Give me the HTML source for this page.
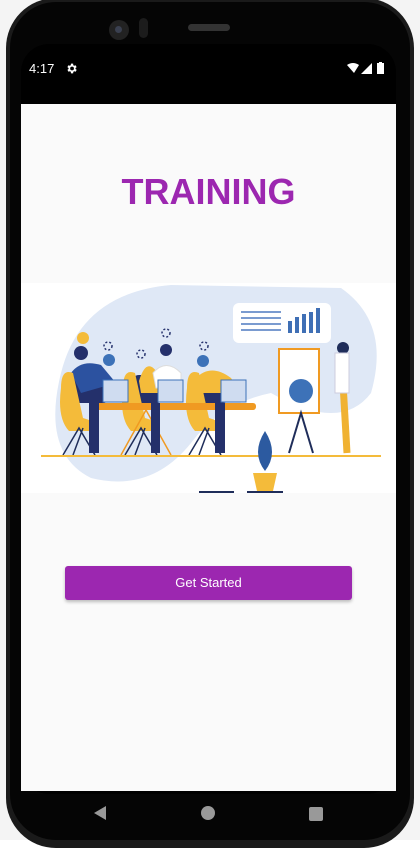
<!DOCTYPE html>
<html><head><meta charset="utf-8"><style>
*{margin:0;padding:0;box-sizing:border-box}
body{width:420px;height:840px;overflow:hidden;background:#fff;position:relative;font-family:"Liberation Sans",sans-serif}
.a{position:absolute}
</style></head><body>
<div class="a" style="left:0;top:0;width:420px;height:840px;background:#f4f4f4"></div>
<div class="a" style="left:6px;top:-2px;width:408px;height:850px;background:#1a1a1a;border-radius:50px"></div>
<div class="a" style="left:10px;top:2px;width:400px;height:838px;background:#050505;border-radius:46px"></div>
<div class="a" style="left:109px;top:20px;width:20px;height:20px;border-radius:50%;background:#222"></div>
<div class="a" style="left:115px;top:26px;width:7px;height:7px;border-radius:50%;background:#3a4050"></div>
<div class="a" style="left:139px;top:18px;width:9px;height:20px;border-radius:5px;background:#1c1c1c"></div>
<div class="a" style="left:188px;top:24px;width:42px;height:7px;border-radius:4px;background:#333"></div>
<div class="a" style="left:21px;top:44px;width:375px;height:750px;background:#000;border-radius:28px"></div>
<div class="a" style="left:29px;top:61px;color:#fff;font-size:13px">4:17</div>
<svg class="a" style="left:65px;top:62px" width="13" height="13" viewBox="0 0 24 24"><path fill="#fff" d="M19.4 13a7.5 7.5 0 000-2l2.1-1.6-2-3.5-2.5 1a7 7 0 00-1.7-1L15 3h-4l-.4 2.9a7 7 0 00-1.7 1l-2.5-1-2 3.5L6.6 11a7.5 7.5 0 000 2l-2.1 1.6 2 3.5 2.5-1a7 7 0 001.7 1L11 21h4l.4-2.9a7 7 0 001.7-1l2.5 1 2-3.5zM13 15.5a3.5 3.5 0 110-7 3.5 3.5 0 010 7z"/></svg>
<svg class="a" style="left:347px;top:62px" width="44" height="13" viewBox="0 0 44 13"><path fill="#fff" d="M0 3 Q6 -1 12 3 L7 11z"/><path fill="#fff" d="M14 12 L25 1 L25 12z"/><rect x="30" y="1" width="7" height="11" fill="#fff"/><rect x="32" y="0" width="3" height="2" fill="#fff"/></svg>
<div class="a" style="left:21px;top:104px;width:375px;height:687px;background:#fafafa"></div>
<div class="a" style="left:21px;top:172px;width:375px;text-align:center;color:#9c27b0;font-weight:bold;font-size:36px;line-height:40px">TRAINING</div>
<div class="a" style="left:21px;top:283px;width:375px;height:210px;background:#fff"></div>
<svg class="a" style="left:21px;top:283px" width="375" height="210" viewBox="0 0 375 210">
<path d="M40 90 Q60 10 150 2 L320 5 Q370 40 350 110 Q320 150 250 110 Q200 120 170 160 Q130 210 70 195 Q20 170 40 90z" fill="#dfe8f6"/>
<rect x="212" y="20" width="98" height="40" rx="6" fill="#fff"/>
<g fill="#7a9bd0"><rect x="220" y="28" width="40" height="2"/><rect x="220" y="34" width="40" height="2"/><rect x="220" y="40" width="40" height="2"/><rect x="220" y="46" width="40" height="2"/></g>
<g fill="#3f6fb5"><rect x="267" y="38" width="4" height="12"/><rect x="274" y="34" width="4" height="16"/><rect x="281" y="31" width="4" height="19"/><rect x="288" y="29" width="4" height="21"/><rect x="295" y="25" width="4" height="25"/></g>
<rect x="258" y="66" width="40" height="64" fill="#fff" stroke="#f09a22" stroke-width="2"/>
<circle cx="280" cy="108" r="12" fill="#3d72b8"/>
<path d="M268 170 L280 130 L292 170" stroke="#1f2d5a" stroke-width="2" fill="none"/>
<path d="M322 100 L326 170" stroke="#f0b232" stroke-width="7"/><circle cx="322" cy="65" r="6" fill="#1f2d5a"/><rect x="314" y="70" width="14" height="40" fill="#fff" stroke="#ccd"/>
<g fill="#24306b"><rect x="50" y="90" width="40" height="30" rx="8"/><rect x="110" y="92" width="30" height="30" rx="8"/><rect x="175" y="92" width="35" height="28" rx="8"/></g>
<circle cx="60" cy="70" r="7" fill="#24306b"/><circle cx="88" cy="77" r="6" fill="#3d72b8"/><circle cx="145" cy="67" r="6" fill="#24306b"/><circle cx="182" cy="78" r="6" fill="#3d72b8"/>
<path d="M50 90 Q60 76 80 82 L95 100 L60 110z" fill="#2c52a0"/>
<path d="M118 98 Q125 75 135 88 L140 110 L120 110z" fill="#f4bb3a"/>
<path d="M132 90 Q145 75 160 90 L160 105 L135 105z" fill="#fff" stroke="#ddd"/>
<path d="M175 95 Q190 80 210 95 L220 110 L180 110z" fill="#f4bb3a"/>
<g fill="#f4bb3a">
<path d="M40 105 Q40 85 52 90 L62 135 Q80 140 70 148 L48 148 Q36 135 40 105z"/>
<path d="M102 105 Q102 85 114 90 L124 135 Q142 140 132 148 L110 148 Q98 135 102 105z"/>
<path d="M166 105 Q166 85 178 90 L188 135 Q206 140 196 148 L174 148 Q162 135 166 105z"/>
</g>
<rect x="75" y="120" width="160" height="7" rx="3" fill="#f09a22"/>
<g fill="#cfdcf0" stroke="#3d72b8"><rect x="82" y="97" width="25" height="22"/><rect x="137" y="97" width="25" height="22"/><rect x="200" y="97" width="25" height="22"/></g>
<g stroke="#1f2d5a" stroke-width="1.5" fill="none"><path d="M42 172 L58 145 L74 172 M52 172 L62 145"/><path d="M104 172 L120 145 L136 172 M114 172 L124 145"/><path d="M168 172 L184 145 L200 172 M178 172 L188 145"/><path d="M100 172 L125 127 L150 172" stroke="#f09a22"/></g>
<g fill="#24306b"><rect x="68" y="120" width="10" height="50"/><rect x="130" y="120" width="9" height="50"/><rect x="194" y="120" width="10" height="50"/></g>
<g fill="#1f2d5a"><rect x="22" y="172" width="13" height="2" fill="#f4bb3a"/></g>
<rect x="20" y="172" width="340" height="2" fill="#f4bb3a"/>
<path d="M232 190 L256 190 L252 208 L236 208z" fill="#f4bb3a"/>
<path d="M244 188 Q230 170 244 148 Q258 170 244 188z" fill="#2c5aa0"/>
<rect x="178" y="208" width="35" height="2" fill="#1f2d5a"/><rect x="226" y="208" width="36" height="2" fill="#1f2d5a"/>
<circle cx="62" cy="55" r="6" fill="#f4bb3a"/>
<g fill="none" stroke="#24306b" stroke-width="1.5" stroke-dasharray="2 2"><circle cx="87" cy="63" r="4"/><circle cx="120" cy="71" r="4"/><circle cx="145" cy="50" r="4"/><circle cx="183" cy="63" r="4"/></g>
</svg>
<div class="a" style="left:65px;top:566px;width:287px;height:34px;background:#9c27b0;border-radius:3px;box-shadow:0 2px 3px rgba(0,0,0,.25);color:#fff;font-size:13px;text-align:center;line-height:34px">Get Started</div>
<svg class="a" style="left:92px;top:805px" width="16" height="16" viewBox="0 0 16 16"><path d="M2 8 L14 1 L14 15z" fill="#999"/></svg>
<div class="a" style="left:201px;top:806px;width:14px;height:14px;border-radius:50%;background:#999"></div>
<div class="a" style="left:309px;top:807px;width:14px;height:14px;border-radius:2px;background:#999"></div>
</body></html>
